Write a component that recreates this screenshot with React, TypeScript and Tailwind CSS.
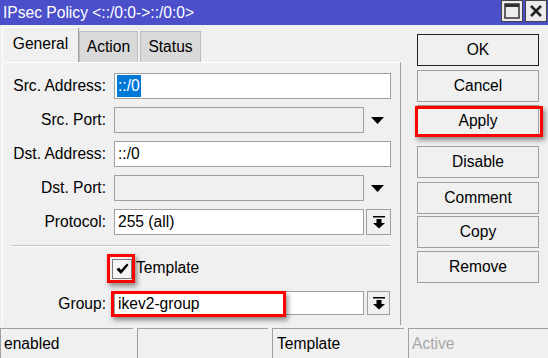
import React from "react";

const FONT = "font-['Liberation_Sans',Arial,sans-serif]";

function RedBox({ className }: { className: string }) {
  return (
    <div
      className={`absolute border-[3px] border-[#ff0000] shadow-[2px_3px_5px_rgba(0,0,0,0.45)] pointer-events-none ${className}`}
    />
  );
}

function DownArrow() {
  return (
    <svg width="13" height="8" viewBox="0 0 13 8">
      <polygon points="0,0 13,0 6.5,7" fill="#000" />
    </svg>
  );
}

function DropButton({ h }: { h: string }) {
  return (
    <div
      className={`flex items-center justify-center border border-[#a0a0a0] bg-[#f0f0f0] ${h}`}
    >
      <svg width="12" height="13" viewBox="0 0 12 13">
        <rect x="0" y="0" width="12" height="1.5" fill="#000" />
        <rect x="3.5" y="3" width="5" height="4" fill="#000" />
        <polygon points="0,7 12,7 6,12.5" fill="#000" />
      </svg>
    </div>
  );
}

function Label({ text }: { text: string }) {
  return <div className="w-[104px] text-right pr-[1px]">{text}</div>;
}

function Row({
  label,
  children,
  className = "",
}: {
  label: string;
  children: React.ReactNode;
  className?: string;
}) {
  return (
    <div className={`flex items-center ${className}`}>
      <Label text={label} />
      <div className="ml-[7px] flex items-center">{children}</div>
    </div>
  );
}

function Button({
  text,
  className = "",
  dark = false,
}: {
  text: string;
  className?: string;
  dark?: boolean;
}) {
  return (
    <div
      className={`relative w-[122px] h-[32px] flex items-center justify-center bg-[#f0f0f0] border ${
        dark ? "border-[#222]" : "border-[#a0a0a0]"
      } ${className}`}
    >
      {text}
    </div>
  );
}

export default function App() {
  return (
    <div
      className={`w-[548px] h-[358px] bg-[#f0f0f0] flex flex-col overflow-hidden text-[15.6px] text-black ${FONT}`}
    >
      {/* title bar */}
      <div className="h-[25px] bg-[#4b4fc9] flex items-center justify-between shrink-0">
        <div className="pl-[3px] text-white">
          IPsec Policy &lt;::/0:0-&gt;::/0:0&gt;
        </div>
        <div className="flex gap-[2px] pr-[1px] self-start">
          <div className="w-[22px] h-[22px] bg-[#ececec] border border-[#444] flex items-center justify-center">
            <svg width="16" height="16" viewBox="0 0 16 16">
              <rect x="1" y="1" width="14" height="14" fill="none" stroke="#333" strokeWidth="1.5" />
              <rect x="1" y="1" width="14" height="3" fill="#333" />
            </svg>
          </div>
          <div className="w-[22px] h-[22px] bg-[#ececec] border border-[#444] flex items-center justify-center">
            <svg width="14" height="14" viewBox="0 0 14 14">
              <path d="M2 2 L12 12 M12 2 L2 12" stroke="#222" strokeWidth="2.6" />
            </svg>
          </div>
        </div>
      </div>

      {/* body */}
      <div className="flex flex-1 min-h-0">
        <div className="w-[402px] pl-[2px] pt-[2px] flex flex-col">
          {/* tabs */}
          <div className="flex items-end h-[35px]">
            <div className="w-[77px] h-[35px] border-t border-l border-white border-r border-r-[#a0a0a0] flex items-center justify-center pb-[2px]">
              General
            </div>
            <div className="w-[59px] h-[31px] bg-[#d9d9d9] border border-[#bcbcbc] border-b-0 flex items-center justify-center">
              Action
            </div>
            <div className="ml-[2px] w-[61px] h-[31px] bg-[#d9d9d9] border border-[#bcbcbc] border-b-0 flex items-center justify-center">
              Status
            </div>
          </div>

          {/* panel */}
          <div className="w-[399px] h-[263px] border-l border-t border-white border-r border-r-[#a0a0a0] pt-[10px]">
            <Row label="Src. Address:">
              <div className="w-[277px] h-[26px] bg-white border border-[#a0a0a0] flex items-center pl-[2px]">
                <span className="bg-[#0078d7] text-white px-[1px] leading-[22px]">::/0</span>
              </div>
            </Row>
            <Row label="Src. Port:" className="mt-[8px]">
              <div className="w-[250px] h-[26px] border border-[#a0a0a0]" />
              <div className="w-[27px] flex items-center justify-center pt-[2px]">
                <DownArrow />
              </div>
            </Row>
            <Row label="Dst. Address:" className="mt-[8px]">
              <div className="w-[277px] h-[26px] bg-white border border-[#a0a0a0] flex items-center pl-[3px]">
                ::/0
              </div>
            </Row>
            <Row label="Dst. Port:" className="mt-[8px]">
              <div className="w-[250px] h-[26px] border border-[#a0a0a0]" />
              <div className="w-[27px] flex items-center justify-center pt-[2px]">
                <DownArrow />
              </div>
            </Row>
            <Row label="Protocol:" className="mt-[8px]">
              <div className="w-[250px] h-[26px] bg-white border border-[#a0a0a0] flex items-center pl-[3px]">
                255 (all)
              </div>
              <div className="ml-[2px]">
                <DropButton h="w-[25px] h-[26px]" />
              </div>
            </Row>

            <div className="ml-[8px] mt-[10px] w-[379px] border-t border-[#c4c4c4] border-b border-b-white" />

            <div className="flex items-center mt-[11px] ml-[109px]">
              <div className="relative w-[20px] h-[20px] bg-[#f4f4f4] border border-[#7a7a7a] flex items-center justify-center">
                <svg width="13" height="12" viewBox="0 0 13 12">
                  <path d="M0.5 6.5 L3 4.5 L5 7 L11 0.5 L12.5 2 L5 11 Z" fill="#000" />
                </svg>
                <RedBox className="left-[-6px] top-[-6px] w-[28px] h-[29px]" />
              </div>
              <span className="ml-[4px] -mt-[2px]">Template</span>
            </div>

            <Row label="Group:" className="mt-[12px]">
              <div className="relative w-[250px] h-[24px] bg-white border border-[#a0a0a0] flex items-center pl-[3px]">
                ikev2-group
                <RedBox className="left-[-4px] top-[-1px] w-[175px] h-[26px]" />
              </div>
              <div className="ml-[3px]">
                <DropButton h="w-[23px] h-[24px]" />
              </div>
            </Row>
          </div>
        </div>

        {/* right buttons */}
        <div className="pl-[15px] pt-[9px] flex flex-col">
          <Button text="OK" dark className="h-[31px]" />
          <Button text="Cancel" className="mt-[4px]" />
          <Button text="Apply" className="mt-[3px]" />
          <div className="relative">
            <RedBox className="left-[-2px] top-[-31px] w-[128px] h-[31px]" />
          </div>
          <Button text="Disable" className="mt-[9px]" />
          <Button text="Comment" className="mt-[4px]" />
          <Button text="Copy" className="mt-[2px]" />
          <Button text="Remove" className="mt-[3px]" />
        </div>
      </div>

      {/* status bar */}
      <div className="h-[31px] flex gap-[4px] pt-[1px] shrink-0">
        <div className="w-[133px] border-t border-l border-[#a0a0a0] flex items-center pl-[3px]">
          enabled
        </div>
        <div className="w-[131px] border-t border-l border-[#a0a0a0]" />
        <div className="w-[132px] border-t border-l border-[#a0a0a0] flex items-center pl-[4px]">
          Template
        </div>
        <div className="flex-1 border-t border-l border-[#a0a0a0] flex items-center pl-[3px] text-[#a8a8a8]">
          Active
        </div>
      </div>
    </div>
  );
}
